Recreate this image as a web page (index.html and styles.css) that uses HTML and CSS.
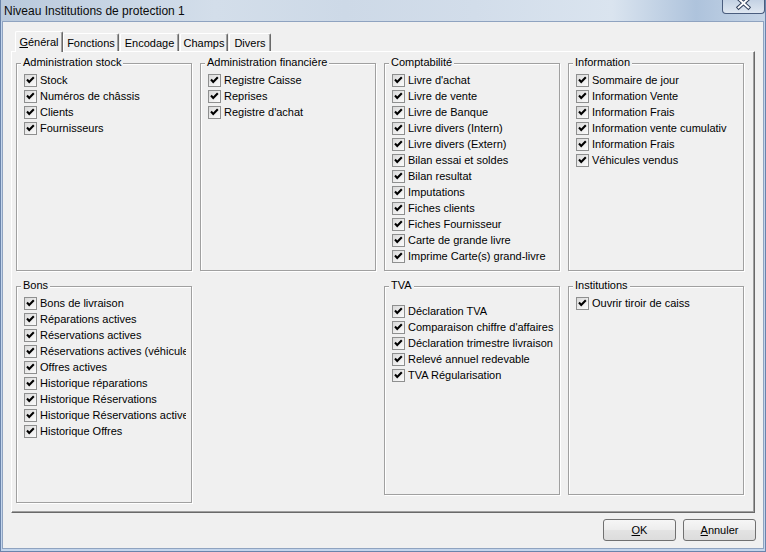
FILE: index.html
```html
<!DOCTYPE html>
<html lang="fr">
<head>
<meta charset="utf-8">
<title>Niveau Institutions de protection 1</title>
<link rel="stylesheet" href="styles.css">
</head>
<body>
<div class="window">
  <div class="titlebar">
    <div class="title">Niveau Institutions de protection 1</div>
    <div class="close">
      <svg width="42" height="13" viewBox="0 0 42 13">
        <path d="M16 -1.5 L26 7.5 M26 -1.5 L16 7.5" stroke="#34435e" stroke-width="4" stroke-linecap="square"/>
        <path d="M16 -1.5 L26 7.5 M26 -1.5 L16 7.5" stroke="#ffffff" stroke-width="2" stroke-linecap="square"/>
      </svg>
    </div>
  </div>
  <div class="frame">
    <div class="client">
      <div class="tabs">
        <div class="tab active t1"><u>G</u>énéral</div>
        <div class="tab t2">Fonctions</div>
        <div class="tab t3">Encodage</div>
        <div class="tab t4">Champs</div>
        <div class="tab t5">Divers</div>
      </div>
      <div class="panel">
        <div class="group">
          <div class="gtitle">Administration stock</div>
          <div class="items">
            <div class="item"><span class="cb"><svg viewBox="0 0 11 11"><path d="M2 4.6 L4.2 6.9 L8.8 2.3"/></svg></span>Stock</div>
            <div class="item"><span class="cb"><svg viewBox="0 0 11 11"><path d="M2 4.6 L4.2 6.9 L8.8 2.3"/></svg></span>Numéros de châssis</div>
            <div class="item"><span class="cb"><svg viewBox="0 0 11 11"><path d="M2 4.6 L4.2 6.9 L8.8 2.3"/></svg></span>Clients</div>
            <div class="item"><span class="cb"><svg viewBox="0 0 11 11"><path d="M2 4.6 L4.2 6.9 L8.8 2.3"/></svg></span>Fournisseurs</div>
          </div>
        </div>
        <div class="group">
          <div class="gtitle">Administration financière</div>
          <div class="items">
            <div class="item"><span class="cb"><svg viewBox="0 0 11 11"><path d="M2 4.6 L4.2 6.9 L8.8 2.3"/></svg></span>Registre Caisse</div>
            <div class="item"><span class="cb"><svg viewBox="0 0 11 11"><path d="M2 4.6 L4.2 6.9 L8.8 2.3"/></svg></span>Reprises</div>
            <div class="item"><span class="cb"><svg viewBox="0 0 11 11"><path d="M2 4.6 L4.2 6.9 L8.8 2.3"/></svg></span>Registre d'achat</div>
          </div>
        </div>
        <div class="group">
          <div class="gtitle">Comptabilité</div>
          <div class="items">
            <div class="item"><span class="cb"><svg viewBox="0 0 11 11"><path d="M2 4.6 L4.2 6.9 L8.8 2.3"/></svg></span>Livre d'achat</div>
            <div class="item"><span class="cb"><svg viewBox="0 0 11 11"><path d="M2 4.6 L4.2 6.9 L8.8 2.3"/></svg></span>Livre de vente</div>
            <div class="item"><span class="cb"><svg viewBox="0 0 11 11"><path d="M2 4.6 L4.2 6.9 L8.8 2.3"/></svg></span>Livre de Banque</div>
            <div class="item"><span class="cb"><svg viewBox="0 0 11 11"><path d="M2 4.6 L4.2 6.9 L8.8 2.3"/></svg></span>Livre divers (Intern)</div>
            <div class="item"><span class="cb"><svg viewBox="0 0 11 11"><path d="M2 4.6 L4.2 6.9 L8.8 2.3"/></svg></span>Livre divers (Extern)</div>
            <div class="item"><span class="cb"><svg viewBox="0 0 11 11"><path d="M2 4.6 L4.2 6.9 L8.8 2.3"/></svg></span>Bilan essai et soldes</div>
            <div class="item"><span class="cb"><svg viewBox="0 0 11 11"><path d="M2 4.6 L4.2 6.9 L8.8 2.3"/></svg></span>Bilan resultat</div>
            <div class="item"><span class="cb"><svg viewBox="0 0 11 11"><path d="M2 4.6 L4.2 6.9 L8.8 2.3"/></svg></span>Imputations</div>
            <div class="item"><span class="cb"><svg viewBox="0 0 11 11"><path d="M2 4.6 L4.2 6.9 L8.8 2.3"/></svg></span>Fiches clients</div>
            <div class="item"><span class="cb"><svg viewBox="0 0 11 11"><path d="M2 4.6 L4.2 6.9 L8.8 2.3"/></svg></span>Fiches Fournisseur</div>
            <div class="item"><span class="cb"><svg viewBox="0 0 11 11"><path d="M2 4.6 L4.2 6.9 L8.8 2.3"/></svg></span>Carte de grande livre</div>
            <div class="item"><span class="cb"><svg viewBox="0 0 11 11"><path d="M2 4.6 L4.2 6.9 L8.8 2.3"/></svg></span>Imprime Carte(s) grand-livre</div>
          </div>
        </div>
        <div class="group">
          <div class="gtitle">Information</div>
          <div class="items">
            <div class="item"><span class="cb"><svg viewBox="0 0 11 11"><path d="M2 4.6 L4.2 6.9 L8.8 2.3"/></svg></span>Sommaire de jour</div>
            <div class="item"><span class="cb"><svg viewBox="0 0 11 11"><path d="M2 4.6 L4.2 6.9 L8.8 2.3"/></svg></span>Information Vente</div>
            <div class="item"><span class="cb"><svg viewBox="0 0 11 11"><path d="M2 4.6 L4.2 6.9 L8.8 2.3"/></svg></span>Information Frais</div>
            <div class="item"><span class="cb"><svg viewBox="0 0 11 11"><path d="M2 4.6 L4.2 6.9 L8.8 2.3"/></svg></span>Information vente cumulativ</div>
            <div class="item"><span class="cb"><svg viewBox="0 0 11 11"><path d="M2 4.6 L4.2 6.9 L8.8 2.3"/></svg></span>Information Frais</div>
            <div class="item"><span class="cb"><svg viewBox="0 0 11 11"><path d="M2 4.6 L4.2 6.9 L8.8 2.3"/></svg></span>Véhicules vendus</div>
          </div>
        </div>
        <div class="group tall">
          <div class="gtitle">Bons</div>
          <div class="items">
            <div class="item"><span class="cb"><svg viewBox="0 0 11 11"><path d="M2 4.6 L4.2 6.9 L8.8 2.3"/></svg></span>Bons de livraison</div>
            <div class="item"><span class="cb"><svg viewBox="0 0 11 11"><path d="M2 4.6 L4.2 6.9 L8.8 2.3"/></svg></span>Réparations actives</div>
            <div class="item"><span class="cb"><svg viewBox="0 0 11 11"><path d="M2 4.6 L4.2 6.9 L8.8 2.3"/></svg></span>Réservations actives</div>
            <div class="item"><span class="cb"><svg viewBox="0 0 11 11"><path d="M2 4.6 L4.2 6.9 L8.8 2.3"/></svg></span>Réservations actives (véhicule</div>
            <div class="item"><span class="cb"><svg viewBox="0 0 11 11"><path d="M2 4.6 L4.2 6.9 L8.8 2.3"/></svg></span>Offres actives</div>
            <div class="item"><span class="cb"><svg viewBox="0 0 11 11"><path d="M2 4.6 L4.2 6.9 L8.8 2.3"/></svg></span>Historique réparations</div>
            <div class="item"><span class="cb"><svg viewBox="0 0 11 11"><path d="M2 4.6 L4.2 6.9 L8.8 2.3"/></svg></span>Historique Réservations</div>
            <div class="item"><span class="cb"><svg viewBox="0 0 11 11"><path d="M2 4.6 L4.2 6.9 L8.8 2.3"/></svg></span>Historique Réservations active</div>
            <div class="item"><span class="cb"><svg viewBox="0 0 11 11"><path d="M2 4.6 L4.2 6.9 L8.8 2.3"/></svg></span>Historique Offres</div>
          </div>
        </div>
        <div class="group short col3">
          <div class="gtitle">TVA</div>
          <div class="items spaced">
            <div class="item"><span class="cb"><svg viewBox="0 0 11 11"><path d="M2 4.6 L4.2 6.9 L8.8 2.3"/></svg></span>Déclaration TVA</div>
            <div class="item"><span class="cb"><svg viewBox="0 0 11 11"><path d="M2 4.6 L4.2 6.9 L8.8 2.3"/></svg></span>Comparaison chiffre d'affaires</div>
            <div class="item"><span class="cb"><svg viewBox="0 0 11 11"><path d="M2 4.6 L4.2 6.9 L8.8 2.3"/></svg></span>Déclaration trimestre livraison</div>
            <div class="item"><span class="cb"><svg viewBox="0 0 11 11"><path d="M2 4.6 L4.2 6.9 L8.8 2.3"/></svg></span>Relevé annuel redevable</div>
            <div class="item"><span class="cb"><svg viewBox="0 0 11 11"><path d="M2 4.6 L4.2 6.9 L8.8 2.3"/></svg></span>TVA Régularisation</div>
          </div>
        </div>
        <div class="group short">
          <div class="gtitle">Institutions</div>
          <div class="items">
            <div class="item"><span class="cb"><svg viewBox="0 0 11 11"><path d="M2 4.6 L4.2 6.9 L8.8 2.3"/></svg></span>Ouvrir tiroir de caiss</div>
          </div>
        </div>
      </div>
      <div class="buttons">
        <button class="btn"><u>O</u>K</button>
        <button class="btn"><u>A</u>nnuler</button>
      </div>
    </div>
  </div>
</div>
</body>
</html>
```
FILE: styles.css
```css
* { box-sizing: border-box; }
html, body { margin: 0; padding: 0; }
body {
  width: 766px;
  height: 552px;
  overflow: hidden;
  font-family: "Liberation Sans", Arial, sans-serif;
  font-size: 11px;
  color: #000;
  background: #bcd0e9;
}
.window {
  width: 766px;
  height: 552px;
  border: 1px solid #6a84ab;
  border-top: 0;
  background: #c3d5ec;
  display: flex;
  flex-direction: column;
}
.titlebar {
  height: 21px;
  flex: none;
  display: flex;
  align-items: flex-start;
  background: linear-gradient(90deg, #b9c9dc 0%, #c5d3e3 12%, #d3deea 28%, #cdd9e7 45%, #d2ddea 62%, #dae4ef 80%, #aec3dc 91%, #c6d5e7 100%);
}
.title {
  font-size: 12px;
  line-height: 21px;
  padding: 1px 0 0 3px;
  color: #0b0b0b;
  white-space: nowrap;
}
.close {
  margin-left: auto;
  width: 43px;
  height: 14px;
  border: 1px solid #4a5d7e;
  border-top: 0;
  border-radius: 0 0 4px 4px;
  background: linear-gradient(#c4d2e4, #dfe7f1);
  overflow: hidden;
  display: flex;
}
.close svg { display: block; }
.frame {
  flex: 1;
  display: flex;
  padding: 0 1px 2px 1px;
}
.client {
  flex: 1;
  background: #f0f0f0;
  border: 1px solid #8fa3c0;
  padding: 9px 8px 0 8px;
  display: flex;
  flex-direction: column;
}
.tabs {
  height: 20px;
  flex: none;
  display: flex;
  align-items: flex-end;
  padding-left: 4px;
  position: relative;
  z-index: 1;
}
.tab {
  height: 18px;
  padding-top: 3px;
  line-height: 13px;
  text-align: center;
  background: #f0f0f0;
  border-top: 1px solid #ffffff;
  border-left: 1px solid #ffffff;
  border-right: 1px solid #696969;
  box-shadow: inset -1px 0 0 #a0a0a0;
  border-radius: 2px 2px 0 0;
  margin-right: 1px;
  white-space: nowrap;
}
.tab.active {
  height: 21px;
  margin-bottom: -1px;
  padding-top: 4px;
  margin-right: 0;
}
.t1 { width: 48px; }
.t2 { width: 56px; }
.t3 { width: 59px; }
.t4 { width: 48px; }
.t5 { width: 42px; }
.panel {
  height: 462px;
  flex: none;
  border-top: 1px solid #ffffff;
  border-left: 1px solid #ffffff;
  border-right: 1px solid #696969;
  border-bottom: 1px solid #696969;
  box-shadow: inset -1px -1px 0 #a0a0a0;
  padding: 11px 0 0 4px;
  display: grid;
  grid-template-columns: repeat(4, 176px);
  grid-template-rows: 208px 217px;
  column-gap: 8px;
  row-gap: 15px;
  align-items: start;
}
.group {
  position: relative;
  height: 208px;
  border: 1px solid #a0a0a0;
  box-shadow: 1px 1px 0 #ffffff, inset 1px 1px 0 #ffffff;
}
.group.tall { height: 217px; }
.group.short { height: 209px; }
.group.col3 { grid-column: 3; }
.gtitle {
  position: absolute;
  left: 4px;
  top: -8px;
  padding: 0 2px;
  line-height: 13px;
  background: #f0f0f0;
  white-space: nowrap;
}
.items {
  padding: 8px 5px 0 7px;
  display: flex;
  flex-direction: column;
}
.items.spaced { padding-top: 16px; }
.item {
  height: 16px;
  display: flex;
  align-items: center;
  white-space: nowrap;
  overflow: hidden;
}
.cb {
  flex: none;
  width: 13px;
  height: 13px;
  margin-right: 3px;
  border: 1px solid #8e8f8f;
  background: linear-gradient(135deg, #d9d9d9 0%, #ededed 55%, #fbfbfb 100%);
  display: flex;
}
.cb svg {
  width: 11px;
  height: 11px;
  display: block;
}
.cb path {
  fill: none;
  stroke: #000;
  stroke-width: 2.1;
}
.buttons {
  display: flex;
  justify-content: flex-end;
  gap: 7px;
  margin-top: 6px;
  margin-right: -1px;
}
.btn {
  width: 73px;
  height: 22px;
  padding: 0;
  border: 1px solid #707070;
  border-radius: 3px;
  background: linear-gradient(#f6f6f6 0%, #ededed 48%, #e3e3e3 52%, #dcdcdc 100%);
  font-family: "Liberation Sans", Arial, sans-serif;
  font-size: 11px;
  color: #000;
  display: flex;
  align-items: center;
  justify-content: center;
}
```
